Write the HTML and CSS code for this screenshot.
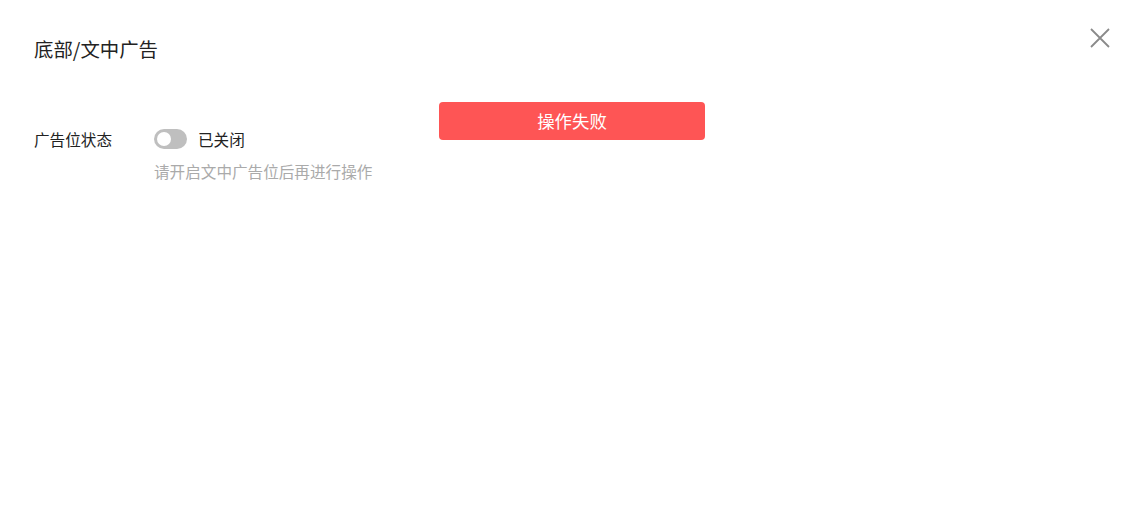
FILE: index.html
```html
<!DOCTYPE html>
<html lang="zh-CN">
<head>
  <meta charset="UTF-8" />
  <title>底部/文中广告</title>
  <link rel="stylesheet" href="styles.css">
</head>
<body>
  <div class="dialog">
    <div class="dialog-header">
      <h2 class="dialog-title">底部/文中广告</h2>
      <button class="close-btn" aria-label="关闭">
        <svg width="20" height="20" viewBox="0 0 20 20">
          <path d="M1 1 L19 19 M19 1 L1 19" stroke="#8a8a8a" stroke-width="1.8" fill="none" />
        </svg>
      </button>
    </div>

    <div class="form-row">
      <span class="form-label">广告位状态</span>
      <div class="form-field">
        <div class="switch-line">
          <span class="switch"><span class="switch-knob"></span></span>
          <span class="switch-text">已关闭</span>
        </div>
        <p class="hint">请开启文中广告位后再进行操作</p>
      </div>
    </div>
  </div>

  <div class="toast">操作失败</div>
</body>
</html>
```

FILE: styles.css
```css
body {
  font-family: "Noto Sans CJK SC", "Noto Sans", sans-serif;
  background-color: white;
  margin: 0;
  color: #222;
}
.dialog {
  padding: 34px 34px 0 34px;
}
.dialog-header {
  display: flex;
  justify-content: space-between;
  align-items: flex-start;
  height: 85px;
}
.dialog-title {
  margin: 0;
  font-size: 19.4px;
  font-weight: normal;
  line-height: 30px;
  color: #222;
}
.close-btn {
  margin: -6px 2px 0 0;
  padding: 0;
  border: none;
  background: none;
  width: 20px;
  height: 20px;
  cursor: pointer;
}
.form-row {
  display: flex;
  align-items: flex-start;
  font-size: 15.6px;
}
.form-label {
  width: 120px;
  line-height: 40px;
  color: #222;
}
.form-field {
  display: flex;
  flex-direction: column;
}
.switch-line {
  display: flex;
  align-items: center;
  height: 40px;
}
.switch {
  display: flex;
  align-items: center;
  width: 33px;
  height: 20px;
  border-radius: 10px;
  background-color: #bfbfbf;
  padding: 0 3px;
  box-sizing: border-box;
}
.switch-knob {
  width: 14px;
  height: 14px;
  border-radius: 50%;
  background-color: white;
}
.switch-text {
  margin-left: 11px;
  color: #222;
}
.hint {
  margin: 0;
  line-height: 24px;
  color: #aaa;
}
.toast {
  position: absolute;
  top: 102px;
  left: 439px;
  width: 266px;
  height: 38px;
  line-height: 38px;
  border-radius: 4px;
  background-color: #fe5555;
  color: white;
  font-family: "Noto Sans CJK SC", sans-serif;
  font-size: 17.4px;
  text-align: center;
}
```
